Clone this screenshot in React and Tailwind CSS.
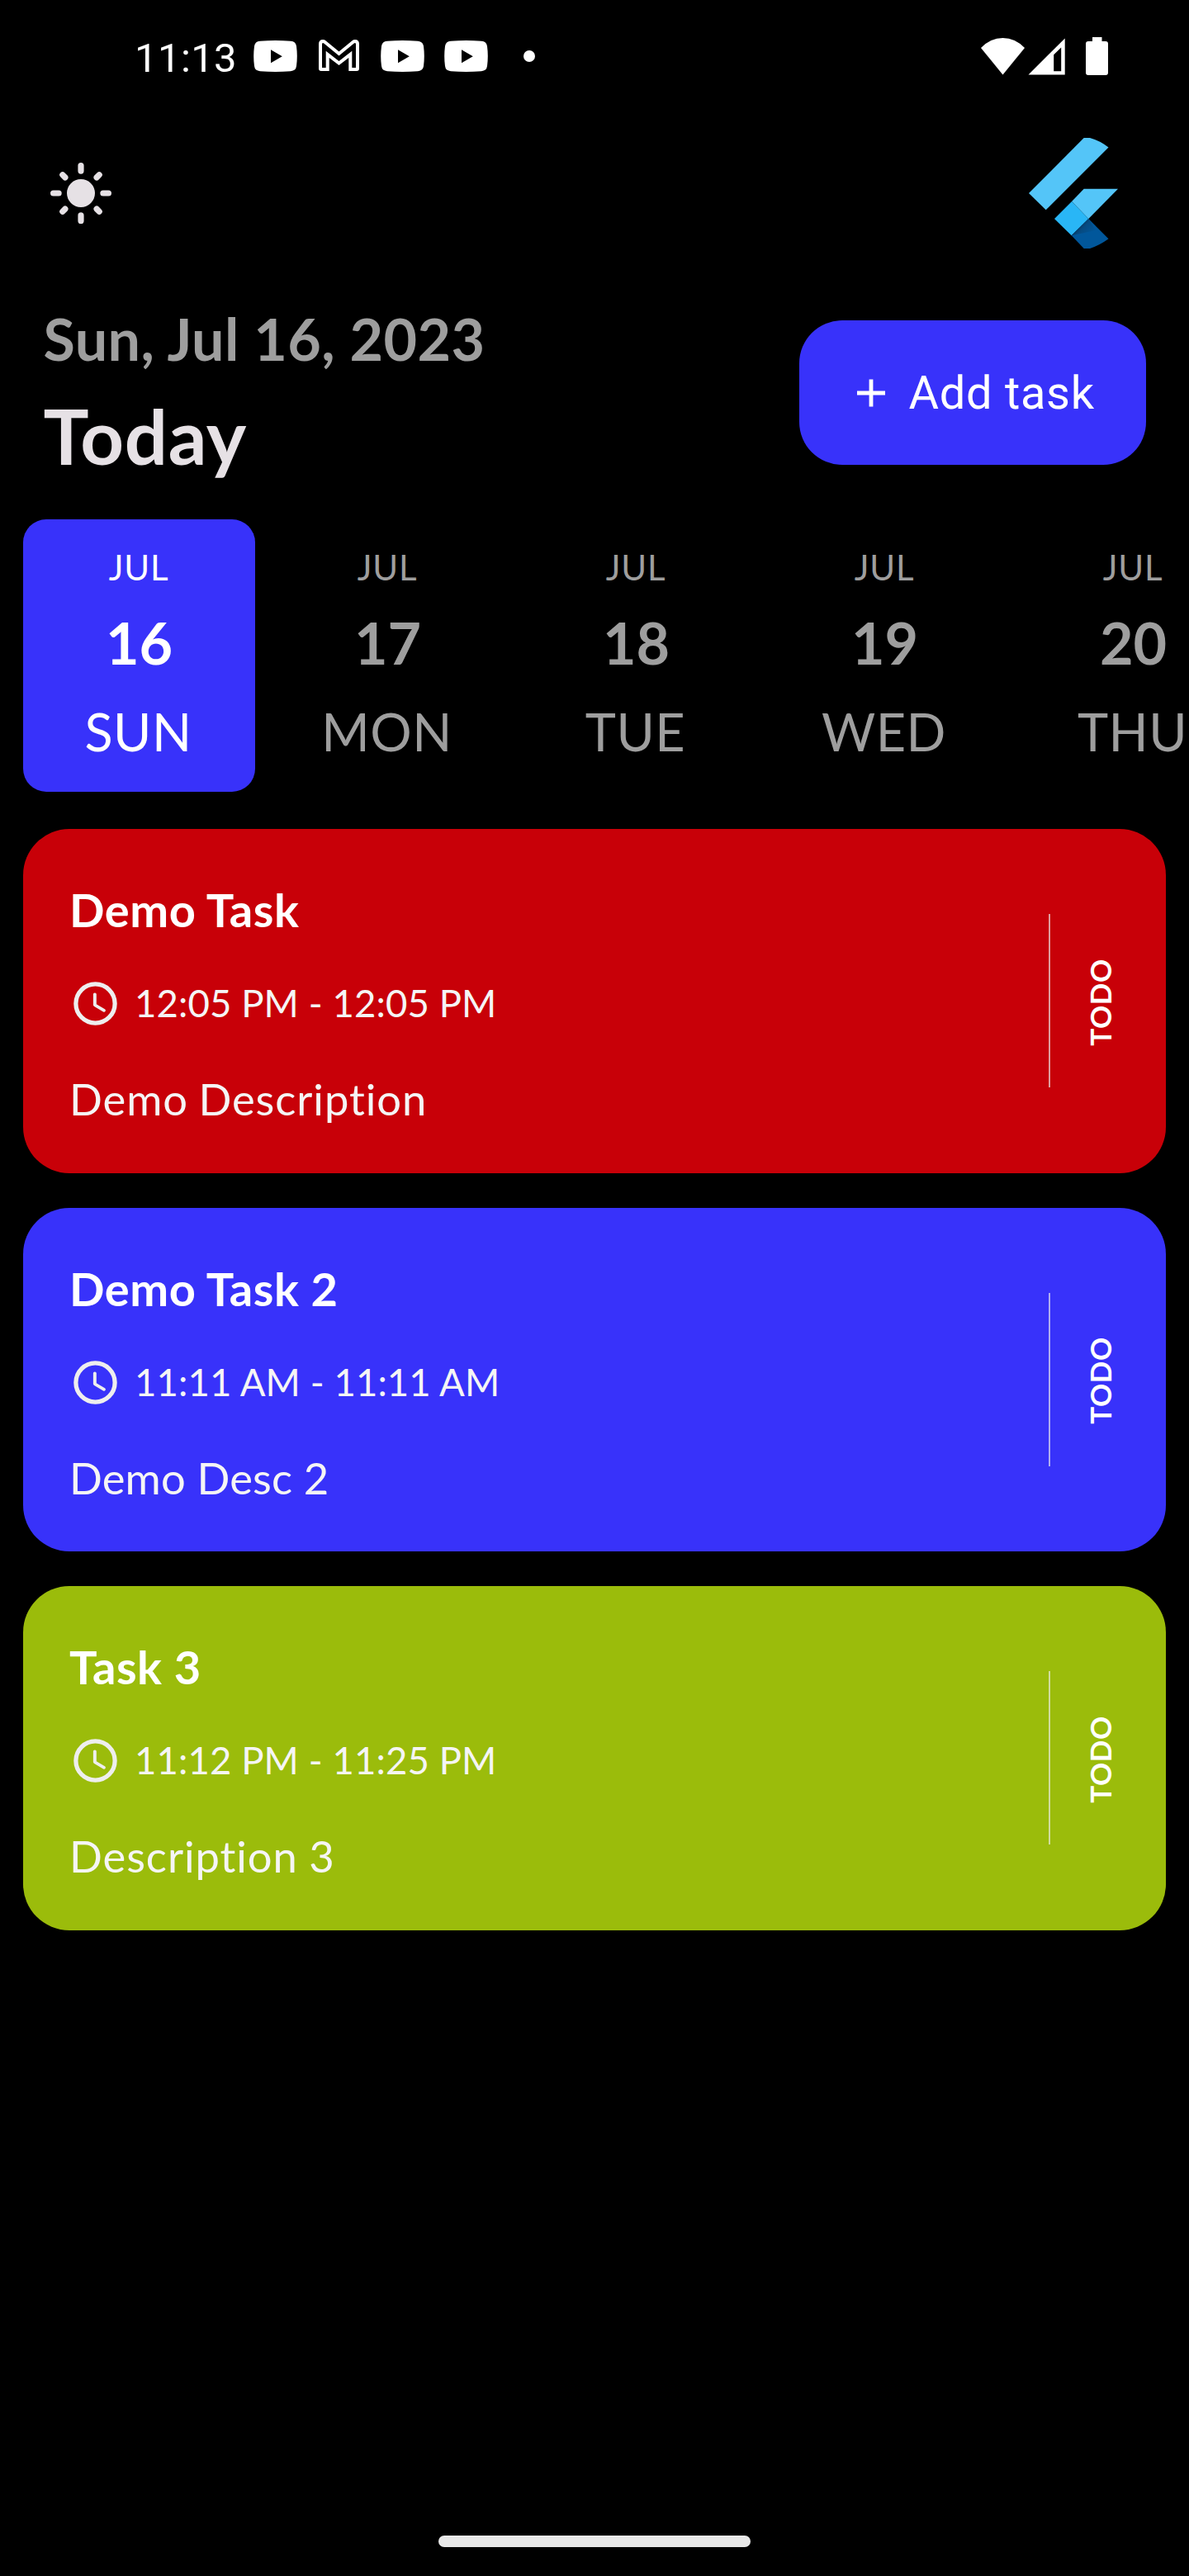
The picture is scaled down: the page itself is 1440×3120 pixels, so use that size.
import React from "react";

const DAYS = [
  { date: "16", day: "SUN", active: true },
  { date: "17", day: "MON" },
  { date: "18", day: "TUE" },
  { date: "19", day: "WED" },
  { date: "20", day: "THU" },
];

const TASKS = [
  {
    title: "Demo Task",
    time: "12:05 PM - 12:05 PM",
    desc: "Demo Description",
    bg: "bg-[#c80008]",
    descSpacing: "tracking-[0.95px] [word-spacing:-2px]",
  },
  {
    title: "Demo Task 2",
    time: "11:11 AM - 11:11 AM",
    desc: "Demo Desc 2",
    bg: "bg-[#3832fa]",
    descSpacing: "tracking-[0.15px]",
  },
  {
    title: "Task 3",
    time: "11:12 PM - 11:25 PM",
    desc: "Description 3",
    bg: "bg-[#9bbc0b]",
    descSpacing: "tracking-[0.95px] [word-spacing:-1px]",
  },
];

function YouTube({ className }) {
  return (
    <svg className={className} width="53" height="38" viewBox="0 0 53 38" fill="#fff">
      <path
        fillRule="evenodd"
        d="M8 .8Q26.500-.6 45 .8Q51.300 1.300 52 7Q53.600 19 52 31Q51.300 36.700 45 37.200Q26.500 38.600 8 37.200Q1.700 36.700 1 31Q-.6 19 1 7Q1.700 1.300 8 .8ZM21 11.300V27.300L34.800 19.300Z"
      />
    </svg>
  );
}

function Gmail({ className }) {
  return (
    <svg className={className} width="49" height="38" viewBox="0 0 49 38" fill="none" stroke="#fff" strokeWidth="4">
      <path d="M3 36Q2 36 2 35V5.500Q2 2 5 2Q6.300 2 7.500 3L24.500 17L41.500 3Q42.700 2 44 2Q47 2 47 5.500V35Q47 36 46 36H38.300V17.800L24.500 28.500L10.700 17.800V36Z" />
    </svg>
  );
}

function StatusBar() {
  return (
    <div className="flex h-[136px] shrink-0 items-center pl-[163px] pr-[98px] text-white">
      <span className="w-[144px] pt-[5px] font-[Roboto,sans-serif] text-[49px] leading-[57px] tracking-[0.4px]">11:13</span>
      <YouTube />
      <Gmail className="mx-[26px] mb-[2px]" />
      <YouTube />
      <YouTube className="ml-6" />
      <span className="ml-[43px] size-3.5 rounded-full bg-white" />
      <svg className="ml-auto" width="53" height="45" viewBox="0 0 53 45" fill="#fff">
        <path d="M0 12Q11.500 0 26.500 0T53 12L26.500 44.500Z" />
      </svg>
      <svg className="ml-1" width="45" height="45" viewBox="0 0 45 45" fill="#fff">
        <path fillRule="evenodd" d="M.5 44.500L44.700.5V44.500ZM31.200 20.300V40.300H40.200V11.600Z" />
      </svg>
      <svg className="ml-[25px]" width="27" height="46" viewBox="0 0 27 46" fill="#fff">
        <path d="M8 0H19.500V5H24Q27 5 27 8V43Q27 46 24 46H3Q0 46 0 43V8Q0 5 3 5H8Z" />
      </svg>
    </div>
  );
}

function SunIcon() {
  return (
    <svg width="84" height="84" viewBox="-42 -42 84 84" stroke="#e6e1e5" strokeWidth="7.200" strokeLinecap="round">
      <circle r="17" fill="#e6e1e5" stroke="none" />
      <path d="M0-33.400V-26.900M0 33.400V26.900M-33.400 0H-26.900M33.400 0H26.900M-22.200-22.200L-19.100-19.100M22.200-22.200L19.100-19.100M-22.200 22.200L-19.100 19.100M22.200 22.200L19.100 19.100" />
    </svg>
  );
}

function FlutterLogo() {
  return (
    <svg width="108" height="134" viewBox="0 0 108 134">
      <defs>
        <linearGradient id="fold" gradientUnits="userSpaceOnUse" x1="58" y1="106" x2="74" y2="121">
          <stop offset="0" stopColor="#0a2c4c" />
          <stop offset="0.35" stopColor="#064a80" />
          <stop offset="1" stopColor="#01579b" />
        </linearGradient>
      </defs>
      <path fill="#54c5f8" d="M66.700 0H74Q86 3.300 96.500 11.500L20.700 87.300L0 67Z" />
      <path fill="#54c5f8" d="M66.700 61.700H108L72.300 98L52 77Z" />
      <path fill="#29b6f6" d="M52 77L72.300 98L51.700 118.300L31 98Z" />
      <path fill="#01579b" d="M72.300 98L96.500 122.300Q86 130 74 134H66.700L51.700 118.300Z" />
      <path fill="url(#fold)" d="M72.300 98L81 112L51.700 118.300Z" />
    </svg>
  );
}

function ClockIcon() {
  return (
    <svg width="63" height="63" viewBox="0 0 24 24" fill="#eee">
      <circle cx="12" cy="12" r="9" fill="none" stroke="#eee" strokeWidth="2" />
      <path d="M11.780 7h-.06c-.4 0-.72.32-.72.72v4.720c0 .35.18.68.49.86l4.150 2.490c.34.2.78.1.98-.24.21-.34.1-.79-.25-.99l-3.870-2.300V7.720c0-.4-.32-.72-.72-.72z" />
    </svg>
  );
}

function DayTile({ date, day, active }) {
  return (
    <div
      className={
        "flex h-[330px] w-[281px] shrink-0 flex-col items-center rounded-[28px] pt-[33px] " +
        (active ? "bg-[#3832fa] text-white" : "text-[#9e9e9e]")
      }
    >
      <span className="pr-px text-[42px] leading-[50px] tracking-[0.7px]">JUL</span>
      <span className="mt-6 text-[70px] leading-[84px] font-bold">{date}</span>
      <span className="mt-7 pr-[2px] text-[63px] leading-[75px] tracking-[0.5px]">{day}</span>
    </div>
  );
}

function TaskCard({ title, time, desc, bg, descSpacing }) {
  return (
    <div className={"flex h-[416.5px] items-center rounded-[56px] pr-[59px] pl-14 " + bg}>
      <div className="flex-1 self-start pt-16">
        <h2 className="text-[56px] leading-[67px] font-bold tracking-[0.55px] text-white">{title}</h2>
        <div className="mt-[49px] flex h-[63px] items-center gap-4">
          <ClockIcon />
          <span className="pb-[2px] text-[45.5px] leading-[55px] tracking-[0.1px] text-[#f5f5f5]">{time}</span>
        </div>
        <p className={"mt-[52px] text-[52.5px] leading-[63px] text-[#f5f5f5] " + descSpacing}>{desc}</p>
      </div>
      <div className="h-[210px] w-[2px] bg-[#eee]/65" />
      <div className="ml-[39px] flex w-[42px] items-center justify-center pt-[3px]">
        <span className="-rotate-90 text-[35px] leading-[42px] font-bold tracking-[0.5px] text-white">TODO</span>
      </div>
    </div>
  );
}

export default function App() {
  return (
    <div className="flex h-[3120px] w-[1440px] flex-col overflow-hidden bg-black font-[Lato,sans-serif]">
      <StatusBar />
      <div className="flex h-[196px] shrink-0 items-center justify-between pr-[86px] pl-14">
        <SunIcon />
        <FlutterLogo />
      </div>
      <div className="flex h-[297px] shrink-0 items-start justify-between pr-[52.5px] pl-[52.5px]">
        <div className="pt-9">
          <p className="text-[70px] leading-[84px] font-bold tracking-[0.4px] text-[#9e9e9e]">Sun, Jul 16, 2023</p>
          <h1 className="mt-[21px] text-[92px] leading-[110px] font-bold tracking-[0.7px] text-[#e6e1e5]">Today</h1>
        </div>
        <button className="mt-14 flex h-[175px] w-[420px] items-center rounded-[52px] bg-[#3832fa] pl-[70px] text-white">
          <svg width="34" height="34" viewBox="0 0 34 34" stroke="#fff" strokeWidth="4.800">
            <path d="M17 .5V33.500M0 17H34" />
          </svg>
          <span className="ml-[29px] font-[Roboto,sans-serif] text-[56px] leading-[66px] tracking-[0.7px]">Add task</span>
        </button>
      </div>
      <div className="flex shrink-0 gap-5 overflow-hidden pl-7">
        {DAYS.map((d) => (
          <DayTile key={d.date} {...d} />
        ))}
      </div>
      <div className="mt-[45px] flex flex-col gap-[42px] px-7">
        {TASKS.map((t) => (
          <TaskCard key={t.title} {...t} />
        ))}
      </div>
      <div className="mx-auto mt-auto mb-[35px] h-3.5 w-[378px] shrink-0 rounded-full bg-[#e8e8e8]" />
    </div>
  );
}
